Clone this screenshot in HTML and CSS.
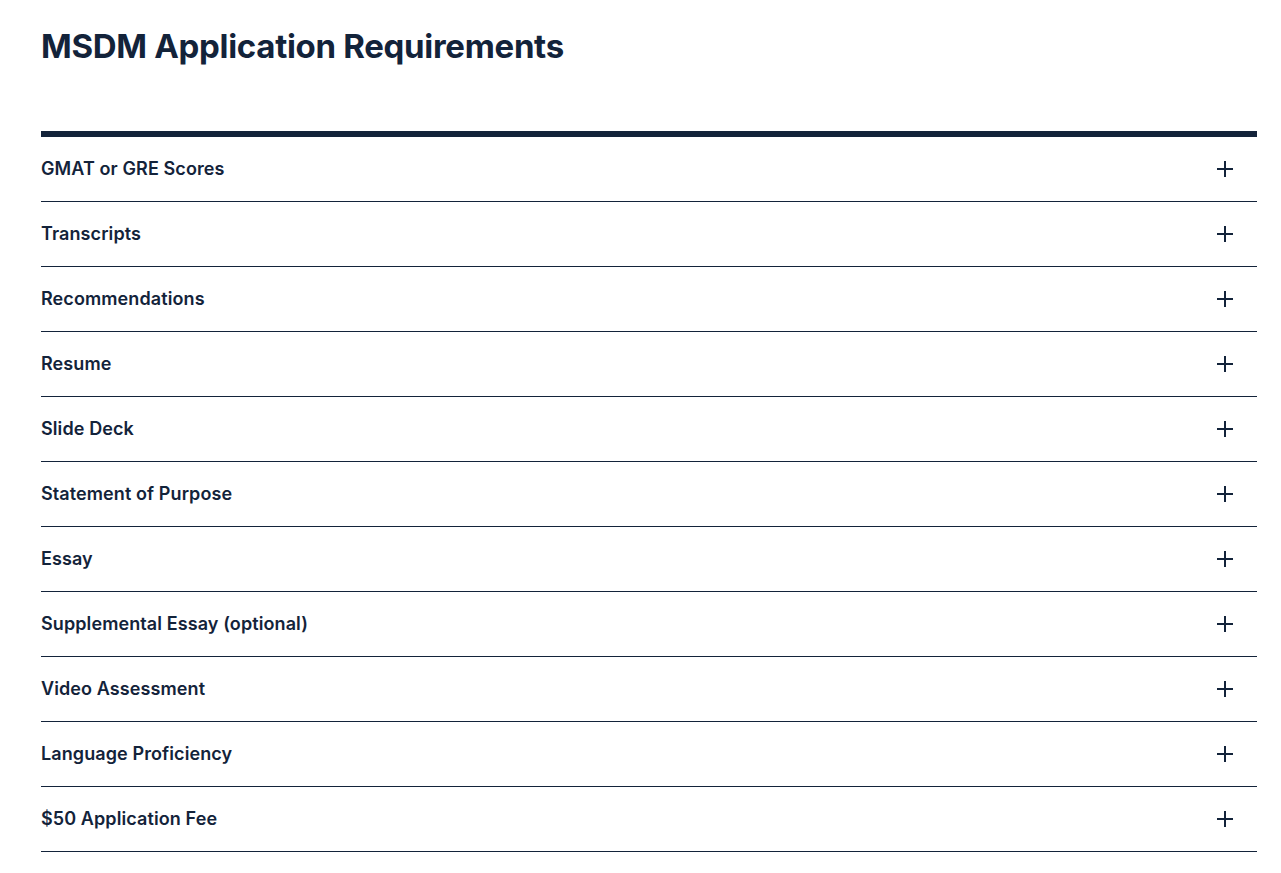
FILE: index.html
```html
<!DOCTYPE html>
<html lang="en">
<head>
    <meta charset="UTF-8">
    <meta name="viewport" content="width=device-width, initial-scale=1.0">
    <title>MSDM Application Requirements</title>
    <link rel="stylesheet" href="styles.css">
</head>
<body>
    <div class="container">
        <h1>MSDM Application Requirements</h1>

        <div class="accordion">
            <div class="item"><span>GMAT or GRE Scores</span><i class="plus"></i></div>
            <div class="item"><span>Transcripts</span><i class="plus"></i></div>
            <div class="item"><span>Recommendations</span><i class="plus"></i></div>
            <div class="item"><span>Resume</span><i class="plus"></i></div>
            <div class="item"><span>Slide Deck</span><i class="plus"></i></div>
            <div class="item"><span>Statement of Purpose</span><i class="plus"></i></div>
            <div class="item"><span>Essay</span><i class="plus"></i></div>
            <div class="item"><span>Supplemental Essay (optional)</span><i class="plus"></i></div>
            <div class="item"><span>Video Assessment</span><i class="plus"></i></div>
            <div class="item"><span>Language Proficiency</span><i class="plus"></i></div>
            <div class="item"><span>$50 Application Fee</span><i class="plus"></i></div>
        </div>
    </div>
</body>
</html>
```

FILE: styles.css
```css
body {
    margin: 0;
    background-color: #fff;
    color: #13233a;
    font-family: Inter, "Noto Sans", sans-serif;
}
.container {
    width: 1216px;
    padding: 0 0 0 41px;
}
h1 {
    margin: 0;
    padding-top: 26px;
    height: 131px;
    box-sizing: border-box;
    font-size: 33px;
    font-weight: 700;
    line-height: 40px;
    letter-spacing: -0.3px;
}
.accordion {
    border-top: 6px solid #13233a;
}
.item {
    display: flex;
    align-items: center;
    justify-content: space-between;
    height: 64px;
    border-bottom: 1px solid #13233a;
    font-size: 18px;
    font-weight: 600;
    letter-spacing: 0.1px;
}
.item span {
    margin-bottom: 2px;
}
.plus {
    position: relative;
    width: 16px;
    height: 16px;
    margin-right: 24px;
}
.plus::before, .plus::after {
    content: "";
    position: absolute;
    background-color: #13233a;
}
.plus::before {
    left: 0;
    top: 7px;
    width: 16px;
    height: 2px;
}
.plus::after {
    left: 7px;
    top: 0;
    width: 2px;
    height: 16px;
}
```
